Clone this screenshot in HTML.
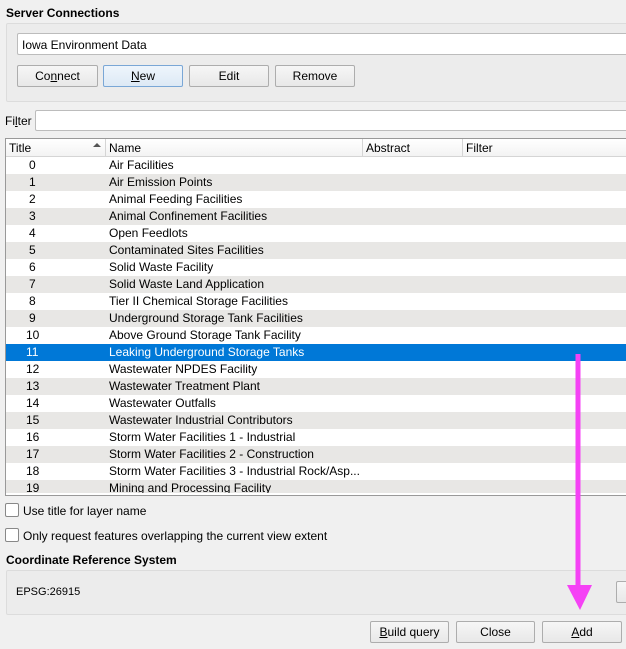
<!DOCTYPE html>
<html><head><style>
*{box-sizing:border-box;margin:0;padding:0}
body{width:626px;height:649px;background:#f0f0f0;font-family:"Liberation Sans",sans-serif;font-size:12px;color:#000;position:relative;overflow:hidden}
.a{position:absolute}
.b{font-weight:bold;font-size:12px}
.grp{border:1px solid #dcdcdc;border-radius:2px;background:#ececec}
.btn{position:absolute;height:22px;border:1px solid #adadad;border-radius:2px;background:linear-gradient(#f6f6f6,#e8e8e8);text-align:center;line-height:20px;font-size:12px}
.inp{position:absolute;background:#fff;border:1px solid #bcbcbc;border-radius:2px}
.row{position:absolute;left:6px;width:620px;height:17px;line-height:17px}
.row span{position:absolute}
.cb{position:absolute;width:14px;height:14px;border:1px solid #888;background:#fff;border-radius:2px}
</style></head><body>
<div class="a b" style="left:6px;top:6px">Server Connections</div>
<div class="a grp" style="left:6px;top:23px;width:630px;height:79px"></div>
<div class="inp" style="left:17px;top:33px;width:620px;height:22px;padding:4px 4px;font-size:12px">Iowa Environment Data</div>
<div class="btn" style="left:17px;top:65px;width:81px">Co<u>n</u>nect</div>
<div class="btn" style="left:103px;top:65px;width:80px;border-color:#7aa7d6;background:linear-gradient(#eef5fc,#dde9f5)"><u>N</u>ew</div>
<div class="btn" style="left:189px;top:65px;width:80px">Edit</div>
<div class="btn" style="left:275px;top:65px;width:80px">Remove</div>
<div class="a" style="left:5px;top:114px">Fi<u>l</u>ter</div>
<div class="inp" style="left:35px;top:110px;width:600px;height:21px"></div>
<div class="a" style="left:5px;top:138px;width:630px;height:358px;background:#fff;border:1px solid #999"></div>
<div class="a" style="left:6px;top:139px;width:620px;height:18px;background:linear-gradient(#fff,#f3f3f3);border-bottom:1px solid #d5d5d5"></div>
<div class="a" style="left:9px;top:141px">Title</div>
<div class="a" style="left:93px;top:143px;width:0;height:0;border-left:4px solid transparent;border-right:4px solid transparent;border-bottom:4px solid #555"></div>
<div class="a" style="left:105px;top:139px;width:1px;height:18px;background:#d5d5d5"></div>
<div class="a" style="left:109px;top:141px">Name</div>
<div class="a" style="left:362px;top:139px;width:1px;height:18px;background:#d5d5d5"></div>
<div class="a" style="left:366px;top:141px">Abstract</div>
<div class="a" style="left:462px;top:139px;width:1px;height:18px;background:#d5d5d5"></div>
<div class="a" style="left:466px;top:141px">Filter</div>
<div id="rows"></div>
<script>
var n=["Air Facilities","Air Emission Points","Animal Feeding Facilities","Animal Confinement Facilities","Open Feedlots","Contaminated Sites Facilities","Solid Waste Facility","Solid Waste Land Application","Tier II Chemical Storage Facilities","Underground Storage Tank Facilities","Above Ground Storage Tank Facility","Leaking Underground Storage Tanks","Wastewater NPDES Facility","Wastewater Treatment Plant","Wastewater Outfalls","Wastewater Industrial Contributors","Storm Water Facilities 1 - Industrial","Storm Water Facilities 2 - Construction","Storm Water Facilities 3 - Industrial Rock/Asp...","Mining and Processing Facility"];
var h="";for(var i=0;i<20;i++){var bg=i==11?"#0078d7":(i%2?"#e8e7e5":"#fff");var c=i==11?"#fff":"#000";var t=157+i*17;var hh=i==19?13:17;
h+='<div class="row" style="top:'+t+'px;height:'+hh+'px;background:'+bg+';color:'+c+';overflow:hidden"><span style="left:'+(i<10?23:20)+'px">'+i+'</span><span style="left:103px">'+n[i]+'</span></div>';}
document.getElementById("rows").innerHTML=h;
</script>
<div class="cb" style="left:5px;top:503px"></div>
<div class="a" style="left:23px;top:504px">Use title for layer name</div>
<div class="cb" style="left:5px;top:528px"></div>
<div class="a" style="left:23px;top:529px">Only request features overlapping the current view extent</div>
<div class="a b" style="left:6px;top:553px">Coordinate Reference System</div>
<div class="a grp" style="left:6px;top:570px;width:630px;height:45px"></div>
<div class="a" style="left:16px;top:586px;font-size:11px">EPSG:26915</div>
<div class="btn" style="left:616px;top:581px;width:30px"></div>
<div class="btn" style="left:370px;top:621px;width:79px"><u>B</u>uild query</div>
<div class="btn" style="left:456px;top:621px;width:79px">Close</div>
<div class="btn" style="left:542px;top:621px;width:80px"><u>A</u>dd</div>
<svg class="a" style="left:0;top:0" width="626" height="649"><rect x="575.5" y="354" width="5" height="233" fill="#f542f5"/><polygon points="567,585 592,585 580,610" fill="#f542f5"/></svg>
</body></html>
